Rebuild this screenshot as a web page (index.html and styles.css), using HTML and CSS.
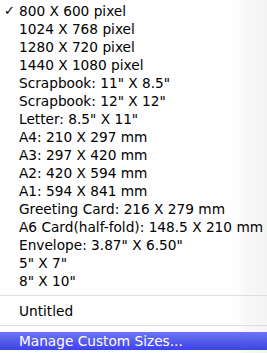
FILE: index.html
```html
<!DOCTYPE html>
<html>
<head>
<meta charset="utf-8">
<link rel="stylesheet" href="styles.css">
</head>
<body>
<div class="menu">
  <div class="item"><span class="check">✓</span>800 X 600 pixel</div>
  <div class="item">1024 X 768 pixel</div>
  <div class="item">1280 X 720 pixel</div>
  <div class="item">1440 X 1080 pixel</div>
  <div class="item">Scrapbook: 11" X 8.5"</div>
  <div class="item">Scrapbook: 12" X 12"</div>
  <div class="item">Letter: 8.5" X 11"</div>
  <div class="item">A4: 210 X 297 mm</div>
  <div class="item">A3: 297 X 420 mm</div>
  <div class="item">A2: 420 X 594 mm</div>
  <div class="item">A1: 594 X 841 mm</div>
  <div class="item">Greeting Card: 216 X 279 mm</div>
  <div class="item">A6 Card(half-fold): 148.5 X 210 mm</div>
  <div class="item">Envelope: 3.87" X 6.50"</div>
  <div class="item">5" X 7"</div>
  <div class="item">8" X 10"</div>
  <div class="sep"></div>
  <div class="item">Untitled</div>
  <div class="sep"></div>
  <div class="item active">Manage Custom Sizes...</div>
</div>
</body>
</html>
```
FILE: styles.css
```css
html, body {
  margin: 0;
  padding: 0;
  background: #fefefe;
}
.menu {
  width: 267px;
  height: 353px;
  padding-top: 2px;
  box-sizing: border-box;
  background: linear-gradient(to right, #fefefe 0, #fefefe 238px, #f7f7f7 245px, #f4f4f4 267px);
  font-family: "DejaVu Sans", sans-serif;
  font-size: 13.7px;
  color: #000;
}
.item {
  position: relative;
  height: 18px;
  line-height: 18px;
  padding-left: 19px;
  white-space: nowrap;
}
.check {
  position: absolute;
  left: 4px;
  top: 0;
  font-size: 13px;
}
.sep {
  height: 12px;
  position: relative;
}
.sep::after {
  content: "";
  position: absolute;
  left: 0;
  right: 0;
  top: 5px;
  height: 1px;
  background: #dedede;
}
.active {
  color: #fff;
  background: linear-gradient(to bottom, #6d76f1, #3d42e8);
}
```
